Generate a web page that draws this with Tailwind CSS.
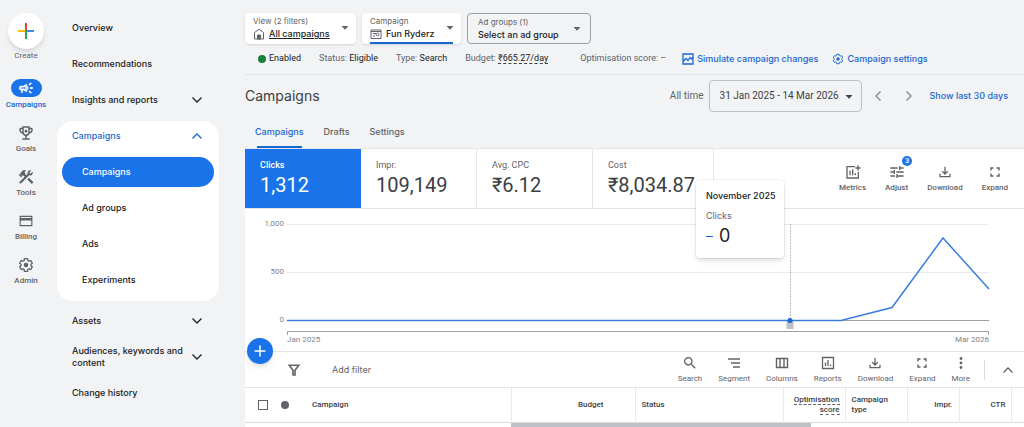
<!DOCTYPE html>
<html lang="en-GB">
<head>
    <meta charset="UTF-8">
    <meta name="viewport" content="width=device-width, initial-scale=1.0">
    <title>Campaigns</title>
    <script src="https://cdn.jsdelivr.net/npm/@tailwindcss/browser@4"></script>
</head>
<body class="flex min-h-screen overflow-x-hidden bg-[#f1f3f4] font-['Roboto',sans-serif] text-[#3c4043]">

    <!-- Shared icons -->
    <svg class="hidden" aria-hidden="true">
        <symbol id="chevron" viewBox="0 0 12 12"><path d="M1.500 3.500 6 8l4.500-4.500" fill="none" stroke="currentColor" stroke-width="1.300"/></symbol>
        <symbol id="arrow" viewBox="0 0 10 6"><path d="M1.500 1h7L5 4.800z" fill="currentColor"/></symbol>
        <symbol id="download" viewBox="0 0 24 24"><path d="M12 3v12M7 10.500l5 5 5-5M3.500 15v5h17v-5" fill="none" stroke="currentColor" stroke-width="2.200"/></symbol>
        <symbol id="expand" viewBox="0 0 24 24"><path d="M4 9V4h5M15 4h5v5M20 15v5h-5M9 20H4v-5" fill="none" stroke="currentColor" stroke-width="2.800"/></symbol>
        <symbol id="gear" viewBox="0 0 24 24">
            <path d="M19.430 12.980c.04-.32.07-.64.07-.98 0-.34-.03-.66-.07-.98l2.110-1.650-2.400-4.100-2.600 1c-.52-.4-1.080-.73-1.690-.98L14.300 2.500H9.700l-.57 2.790c-.61.25-1.170.59-1.690.98l-2.600-1-2.400 4.100 2.130 1.650c-.04.32-.07.65-.07.98 0 .33.03.66.07.98l-2.130 1.650 2.400 4.100 2.600-1c.52.4 1.080.73 1.690.98l.57 2.790h4.600l.55-2.790c.61-.25 1.170-.59 1.690-.98l2.600 1 2.400-4.100z" fill="none" stroke="currentColor" stroke-width="2" stroke-linejoin="round"/>
            <circle cx="12" cy="12" r="3.400" fill="currentColor"/>
        </symbol>
    </svg>

    <!-- Rail -->
    <nav class="flex w-[52px] shrink-0 flex-col items-center gap-[13px] pt-[13px] text-[8px] leading-3 text-[#5f6368]" aria-label="Main">
        <button class="mb-1 flex flex-col items-center">
            <span class="flex size-9 items-center justify-center rounded-full bg-white shadow-md">
                <svg class="size-4" viewBox="0 0 16 16">
                    <path d="M7 0h2v7H7z" fill="#ea4335"/>
                    <path d="M0 7h7v2H0z" fill="#fbbc04"/>
                    <path d="M7 7h2v9H7z" fill="#34a853"/>
                    <path d="M9 7h7v2H9z" fill="#4285f4"/>
                </svg>
            </span>
            <span class="mt-px">Create</span>
        </button>
        <a href="#" class="flex flex-col items-center gap-0.5 font-medium text-[#1a67d2]">
            <span class="flex h-[18px] w-[31px] items-center justify-center rounded-full bg-[#1a73e8] text-white">
                <svg class="size-4" viewBox="0 0 24 24" fill="currentColor"><path d="M18 11v2h4v-2h-4zm-2 6.610c.96.71 2.210 1.650 3.200 2.390.4-.53.8-1.070 1.200-1.600-.99-.74-2.240-1.680-3.200-2.400-.4.54-.8 1.080-1.200 1.610zM20.400 5.600c-.4-.53-.8-1.070-1.200-1.600-.99.74-2.240 1.680-3.200 2.400.4.53.8 1.070 1.200 1.600.96-.72 2.210-1.650 3.200-2.400zM4 9c-1.100 0-2 .9-2 2v2c0 1.100.9 2 2 2h1v4h2v-4h1l5 3V6L8 9H4zm5.030 1.710L11 9.530v4.940l-1.970-1.180-.48-.29H4v-2h4.550l.48-.29zM15.500 12c0-1.330-.58-2.530-1.500-3.350v6.690c.92-.81 1.500-2.010 1.500-3.340z" stroke="currentColor" stroke-width=".6"/></svg>
            </span>
            Campaigns
        </a>
        <a href="#" class="flex flex-col items-center gap-px font-medium">
            <svg class="size-[18px]" viewBox="0 0 24 24" fill="currentColor"><path d="M19 5h-2V3H7v2H5c-1.100 0-2 .9-2 2v1c0 2.550 1.920 4.630 4.390 4.940.63 1.500 1.980 2.630 3.610 2.960V19H7v2h10v-2h-4v-3.100c1.630-.33 2.980-1.460 3.610-2.960C19.080 12.630 21 10.550 21 8V7c0-1.100-.9-2-2-2zM5 8V7h2v3.820C5.840 10.400 5 9.300 5 8zm7 6c-1.650 0-3-1.350-3-3V5h6v6c0 1.650-1.350 3-3 3zm7-6c0 1.300-.84 2.400-2 2.820V7h2v1z"/><circle cx="12" cy="9.500" r="1.800"/></svg>
            Goals
        </a>
        <a href="#" class="flex flex-col items-center gap-px font-medium">
            <svg class="size-[18px]" viewBox="0 0 24 24" fill="currentColor"><path d="m13.780 15.170 2.120-2.120 6 6-2.120 2.120zM17.500 10c1.930 0 3.500-1.570 3.500-3.500 0-.58-.16-1.120-.41-1.600l-2.700 2.700-1.490-1.490 2.700-2.700c-.48-.25-1.020-.41-1.600-.41C15.570 3 14 4.570 14 6.500c0 .41.080.8.210 1.160l-1.850 1.850-1.780-1.780.71-.71-1.410-1.410L12 3.490c-1.170-1.170-3.070-1.170-4.240 0L4.220 7.030l1.410 1.410H2.810l-.71.71 3.540 3.540.71-.71V9.150l1.410 1.410.71-.71 1.780 1.780-7.410 7.410 2.120 2.120L16.340 9.790c.36.130.75.210 1.160.210z"/></svg>
            Tools
        </a>
        <a href="#" class="flex flex-col items-center gap-px font-medium">
            <svg class="size-[18px] p-0.5" viewBox="0 0 24 24" fill="currentColor"><path d="M22 3H2C1.400 3 1 3.400 1 4v16c0 .6.4 1 1 1h20c.6 0 1-.4 1-1V4c0-.6-.4-1-1-1zm-1 16H3v-8h18v8zm0-12H3V5h18v2z"/></svg>
            Billing
        </a>
        <a href="#" class="flex flex-col items-center gap-px font-medium">
            <svg class="size-[18px] p-px"><use href="#gear"/></svg>
            Admin
        </a>
    </nav>

    <!-- Sections -->
    <nav class="ml-[5px] w-[162px] shrink-0 pt-2.5 font-['Inter',sans-serif] text-[9px] font-medium leading-3 text-[#202124]" aria-label="Sections">
        <a href="#" class="flex h-9 items-center pl-[15px]">Overview</a>
        <a href="#" class="flex h-9 items-center pl-[15px]">Recommendations</a>
        <button class="flex h-9 w-full items-center justify-between pl-[15px] pr-4">Insights and reports <svg class="size-3"><use href="#chevron"/></svg></button>
        <div class="mt-[3px] flex flex-col gap-1.5 rounded-2xl bg-white px-[5px] pb-1.5">
            <button class="flex h-[30px] w-full items-center justify-between pl-2.5 pr-[11px] text-[#1a67d2]">Campaigns <svg class="size-3 rotate-180"><use href="#chevron"/></svg></button>
            <a href="#" class="flex h-[30px] items-center rounded-full bg-[#1a73e8] pl-5 text-white">Campaigns</a>
            <a href="#" class="flex h-[30px] items-center pl-5">Ad groups</a>
            <a href="#" class="flex h-[30px] items-center pl-5">Ads</a>
            <a href="#" class="flex h-[30px] items-center pl-5">Experiments</a>
        </div>
        <button class="mt-0.5 flex h-9 w-full items-center justify-between pl-[15px] pr-4">Assets <svg class="size-3"><use href="#chevron"/></svg></button>
        <button class="flex h-9 w-full items-center justify-between pl-[15px] pr-4 text-left">Audiences, keywords and content <svg class="size-3 shrink-0"><use href="#chevron"/></svg></button>
        <a href="#" class="flex h-9 items-center pl-[15px]">Change history</a>
    </nav>

    <main class="relative ml-[26px] min-w-0 flex-1 pt-[13px]">
        <!-- Scope selectors -->
        <div class="flex h-[31px] gap-1.5 font-['Inter',sans-serif] text-[#5f6368]">
            <div class="relative w-[111px] rounded-sm bg-white pl-2 pt-[3px] shadow">
                <label for="view" class="block text-[8px] leading-[11px]">View (2 filters)</label>
                <div class="flex items-center gap-1">
                    <svg class="size-3" viewBox="0 0 12 12" fill="none" stroke="currentColor"><path d="M1.500 11V4.500L6 1.300l4.500 3.200V11z"/><path d="M4.500 11V7h3v4z" fill="currentColor"/></svg>
                    <select id="view" class="flex-1 appearance-none text-[9px] font-medium leading-[13px] text-[#202124] underline"><option>All campaigns</option></select>
                </div>
                <svg class="pointer-events-none absolute right-1.5 top-3 h-1.5 w-2.5"><use href="#arrow"/></svg>
            </div>
            <div class="relative w-[99px] rounded-sm bg-white pl-2 pt-[3px] shadow">
                <label for="campaign" class="block text-[8px] leading-[11px]">Campaign</label>
                <div class="flex items-center gap-1">
                    <svg class="size-3" viewBox="0 0 12 12" fill="none" stroke="currentColor"><path d="M1 2h10v8.500H1zM1 3.500h10M3 5.500h3M3 8h2"/><circle cx="7.500" cy="6.500" r="1.400"/></svg>
                    <select id="campaign" class="flex-1 appearance-none text-[9px] font-medium leading-[13px] text-[#202124]"><option>Fun Ryderz</option></select>
                </div>
                <svg class="pointer-events-none absolute right-1.5 top-3 h-1.5 w-2.5"><use href="#arrow"/></svg>
                <span class="absolute inset-x-2 bottom-0 h-0.5 bg-[#1a67d2]"></span>
            </div>
            <div class="relative w-[124px] rounded-sm border border-[#9aa0a6] pl-2.5 pt-[3px]">
                <label for="adgroup" class="block text-[8px] leading-[11px]">Ad groups (1)</label>
                <select id="adgroup" class="block w-full appearance-none text-[9px] font-medium leading-[13px] text-[#202124]"><option>Select an ad group</option></select>
                <svg class="pointer-events-none absolute right-2 top-3 h-1.5 w-2.5"><use href="#arrow"/></svg>
            </div>
        </div>

        <!-- Campaign status -->
        <div class="flex h-[31px] items-center border-b border-[#e3e5e8] pl-[13px] text-[9px] text-[#5f6368]">
            <span class="mr-[3px] size-2 rounded-full bg-[#188038]"></span>
            <span class="text-[#202124]">Enabled</span>
            <span class="ml-[18px]">Status: <span class="text-[#202124]">Eligible</span></span>
            <span class="ml-[18px]">Type: <span class="text-[#202124]">Search</span></span>
            <span class="ml-[18px]">Budget: <a href="#" class="border-b border-dashed border-[#3c4043] text-[#202124]">₹665.27/day</a></span>
            <span class="ml-8">Optimisation score: –</span>
            <a href="#" class="ml-4 flex items-center gap-[3px] font-['Inter',sans-serif] font-medium text-[#1a67d2]">
                <svg class="size-3" viewBox="0 0 12 12" fill="none" stroke="currentColor" stroke-width="1.300"><path d="M1 1h10v10H1zM1 8.500l3-3 2 2 2-3 1.500 1.500L11 4"/></svg>
                Simulate campaign changes
            </a>
            <a href="#" class="ml-3.5 flex items-center gap-[3px] font-['Inter',sans-serif] font-medium text-[#1a67d2]">
                <svg class="size-3"><use href="#gear"/></svg>
                Campaign settings
            </a>
        </div>

        <!-- Title and date range -->
        <div class="flex h-[41px] items-center pr-4 text-[10px]">
            <h1 class="flex-1 font-['Inter',sans-serif] text-sm">Campaigns</h1>
            <label for="range" class="mr-[5px] text-[#5f6368]">All time</label>
            <div class="relative">
                <select id="range" class="block h-8 w-[153px] appearance-none rounded-sm border border-[#bdc1c6] pl-2.5 text-[#3c4043]"><option>31 Jan 2025 - 14 Mar 2026</option></select>
                <svg class="pointer-events-none absolute right-2 top-3.5 h-1.5 w-2.5"><use href="#arrow"/></svg>
            </div>
            <button class="ml-2.5 text-[#80868b]" aria-label="Previous period"><svg class="size-3 rotate-90"><use href="#chevron"/></svg></button>
            <button class="ml-[19px] text-[#80868b]" aria-label="Next period"><svg class="size-3 -rotate-90"><use href="#chevron"/></svg></button>
            <a href="#" class="ml-[15px] font-['Inter',sans-serif] text-[9px] font-medium text-[#1a67d2]">Show last 30 days</a>
        </div>

        <!-- Tabs -->
        <div class="flex h-8 gap-5 pl-2.5 font-['Inter',sans-serif] text-[9px] font-medium text-[#5f6368]" role="tablist">
            <button class="relative text-[#1a67d2]" role="tab" aria-selected="true">Campaigns<span class="absolute inset-x-0.5 bottom-0 h-0.5 bg-[#1a67d2]"></span></button>
            <button role="tab">Drafts</button>
            <button role="tab">Settings</button>
        </div>

        <div class="bg-white">
            <!-- Metric cards -->
            <div class="flex h-[61px] border-y border-[#e3e5e8] text-[9px] text-[#5f6368]">
                <button class="w-[116px] bg-[#1a73e8] pl-[15px] text-left font-medium text-white"><span class="block leading-3">Clicks</span><span class="block text-xl font-normal">1,312</span></button>
                <button class="w-[116px] border-r border-[#e3e5e8] pl-[15px] text-left"><span class="block leading-3">Impr.</span><span class="block text-xl text-[#3c4043]">109,149</span></button>
                <button class="w-[116px] border-r border-[#e3e5e8] pl-[15px] text-left"><span class="block leading-3">Avg. CPC</span><span class="block text-xl text-[#3c4043]">₹6.12</span></button>
                <button class="w-[121px] border-r border-[#e3e5e8] pl-[15px] text-left"><span class="block leading-3">Cost</span><span class="block text-xl text-[#3c4043]">₹8,034.87</span></button>
                <div class="flex flex-1 items-center justify-end gap-[19px] pr-4 text-[8px] font-medium leading-3">
                    <button class="flex flex-col items-center gap-0.5">
                        <svg class="size-4" viewBox="0 0 24 24" fill="none" stroke="currentColor" stroke-width="2"><path d="M15 4H3v17h17v-9M7.500 17v-7M11.500 17V8M15.500 17v-3M19.500 2v8M15.500 6h8"/></svg>
                        Metrics
                    </button>
                    <button class="relative flex flex-col items-center gap-0.5">
                        <svg class="size-4" viewBox="0 0 24 24" fill="currentColor"><path d="M2 17v2h7v-2H2zM2 5v2h11V5H2zm11 16v-2h9v-2h-9v-2h-2v6h2zM7 9v2H2v2h5v2h2V9H7zm15 4v-2H11v2h11zm-7-4h2V7h5V5h-5V3h-2v6z"/></svg>
                        Adjust
                        <span class="absolute -right-1 -top-2 flex size-2.5 items-center justify-center rounded-full bg-[#1a73e8] text-[7px] text-white">3</span>
                    </button>
                    <button class="flex flex-col items-center gap-0.5"><svg class="size-4 p-px"><use href="#download"/></svg>Download</button>
                    <button class="flex flex-col items-center gap-0.5"><svg class="size-4 p-0.5"><use href="#expand"/></svg>Expand</button>
                </div>
            </div>

            <!-- Chart -->
            <div class="flex h-[143px] border-b border-[#e3e5e8] pr-[35px] pt-[9px] text-[8px] leading-3 text-[#80868b]">
                <div class="flex h-[108px] w-[42px] flex-col justify-between pr-[3px] text-right">
                    <span>1,000</span>
                    <span>500</span>
                    <span>0</span>
                </div>
                <div class="relative flex-1 pt-1.5">
                    <svg class="block h-[111px] w-full overflow-visible" viewBox="0 0 702 111" preserveAspectRatio="none" fill="none">
                        <path d="M0 .5h702M0 48.500h702" stroke="#e8eaed"/>
                        <path d="M0 96.500h702" stroke="#9aa0a6"/>
                        <path d="M.5 111v-3.500h701V111" stroke="#9aa0a6"/>
                        <path d="M503.500 0v96" stroke="#bdc1c6" stroke-dasharray="2 1"/>
                        <path d="M0 96.500h554l51-13L656 14l46 51" stroke="#3b7ddd" stroke-width="1.500" vector-effect="non-scaling-stroke"/>
                    </svg>
                    <div class="flex justify-between leading-[10px]"><span>Jan 2025</span><span>Mar 2026</span></div>
                    <!-- Hovered month -->
                    <span class="absolute left-[71.700%] top-[103px] h-2 w-[7px] -translate-x-1/2 bg-[#bdc1c6]"></span>
                    <span class="absolute left-[71.700%] top-[100px] size-[5px] -translate-x-1/2 rounded-full bg-[#1a67d2]"></span>
                    <div class="absolute right-[205px] -top-[38px] h-[78px] w-[88px] rounded-sm bg-white pl-2.5 pt-2.5 font-['Inter',sans-serif] shadow-md ring-1 ring-black/5">
                        <p class="text-[9px] font-medium text-[#202124]">November 2025</p>
                        <p class="mt-2 text-[9px] text-[#5f6368]">Clicks</p>
                        <p class="mt-1 flex items-center gap-1.5 text-lg leading-5 text-[#202124]"><span class="h-px w-[7px] bg-[#1a67d2]"></span>0</p>
                    </div>
                </div>
            </div>

            <!-- Table toolbar -->
            <div class="flex h-9 items-center border-b border-[#e3e5e8] pl-[42px] pr-2.5 text-[#5f6368]">
                <svg class="size-3.5" viewBox="0 0 14 14" fill="none" stroke="currentColor" stroke-width="1.600"><path d="M2.200 2.200h9.600L8 7.300V12H6V7.300z"/></svg>
                <input type="text" aria-label="Add filter" placeholder="Add filter" class="ml-[31px] min-w-0 flex-1 font-['Inter',sans-serif] text-[9px] outline-none placeholder:text-[#5f6368]">
                <div class="flex gap-4 text-[8px] leading-3">
                    <button class="flex flex-col items-center gap-0.5"><svg class="size-4" viewBox="0 0 24 24" fill="currentColor"><path d="M15.500 14h-.79l-.28-.27C15.410 12.590 16 11.110 16 9.500 16 5.910 13.090 3 9.500 3S3 5.910 3 9.500 5.910 16 9.500 16c1.610 0 3.090-.59 4.230-1.570l.27.28v.79l5 4.990L20.490 19l-4.990-5zm-6 0C7.010 14 5 11.990 5 9.500S7.010 5 9.500 5 14 7.010 14 9.500 11.990 14 9.500 14z"/></svg>Search</button>
                    <button class="flex flex-col items-center gap-0.5"><svg class="size-4" viewBox="0 0 16 16" fill="none" stroke="currentColor" stroke-width="1.400"><path d="M2 4h12M5 8h9M7 12h7"/></svg>Segment</button>
                    <button class="flex flex-col items-center gap-0.5"><svg class="size-4" viewBox="0 0 16 16" fill="none" stroke="currentColor" stroke-width="1.400"><path d="M2.500 3.500h11v9h-11zM6 3.500v9M10 3.500v9"/></svg>Columns</button>
                    <button class="flex flex-col items-center gap-0.5"><svg class="size-4" viewBox="0 0 16 16" fill="none" stroke="currentColor" stroke-width="1.300"><path d="M2.500 2.500h11v11h-11zM5.500 11V7.500M8 11V5M10.500 11V9.500"/></svg>Reports</button>
                    <button class="flex flex-col items-center gap-0.5"><svg class="size-4 p-px"><use href="#download"/></svg>Download</button>
                    <button class="flex flex-col items-center gap-0.5"><svg class="size-4 p-0.5"><use href="#expand"/></svg>Expand</button>
                    <button class="flex flex-col items-center gap-0.5"><svg class="size-4" viewBox="0 0 16 16" fill="currentColor"><circle cx="8" cy="3.500" r="1.400"/><circle cx="8" cy="8" r="1.400"/><circle cx="8" cy="12.500" r="1.400"/></svg>More</button>
                </div>
                <span class="ml-3.5 h-5 w-px bg-[#dadce0]"></span>
                <button class="ml-[17px]" aria-label="Collapse"><svg class="size-3 rotate-180"><use href="#chevron"/></svg></button>
            </div>

            <!-- Table -->
            <table class="w-full table-fixed text-[8px] leading-[10px] text-[#3c4043]">
                <thead>
                    <tr class="h-[34px] border-b border-[#dadce0] text-left *:border-r *:border-[#e8eaed] *:font-medium *:last:border-r-0">
                        <th class="w-[266px] pl-[13px]">
                            <div class="flex items-center">
                                <input type="checkbox" aria-label="Select all" class="size-2.5 appearance-none border border-[#5f6368]">
                                <span class="ml-[13px] size-2 rounded-full bg-[#5f6368]"></span>
                                <span class="ml-[23px]">Campaign</span>
                            </div>
                        </th>
                        <th class="w-[124px] pr-[31px] text-right">Budget</th>
                        <th class="pl-1.5">Status</th>
                        <th class="w-[62px] pr-[5px] text-right"><span class="border-b border-dashed border-[#5f6368]">Optimisation</span> <span class="border-b border-dashed border-[#5f6368]">score</span></th>
                        <th class="w-[62px] pl-1.5 pr-4">Campaign type</th>
                        <th class="w-[52px] pr-1.5 text-right">Impr.</th>
                        <th class="w-[52px] pr-[5px] text-right">CTR</th>
                        <th class="w-[13px]"></th>
                    </tr>
                </thead>
            </table>
            <div class="h-[5px] pl-[266px]"><div class="h-full w-[300px] bg-[#bdc1c6]"></div></div>
        </div>

        <button class="absolute left-0.5 top-[338px] flex size-[26px] items-center justify-center rounded-full bg-[#1a73e8] text-white shadow-md" aria-label="New campaign">
            <svg class="size-3" viewBox="0 0 12 12" stroke="currentColor" stroke-width="1.500"><path d="M6 .5v11M.5 6h11"/></svg>
        </button>
    </main>
</body>
</html>
